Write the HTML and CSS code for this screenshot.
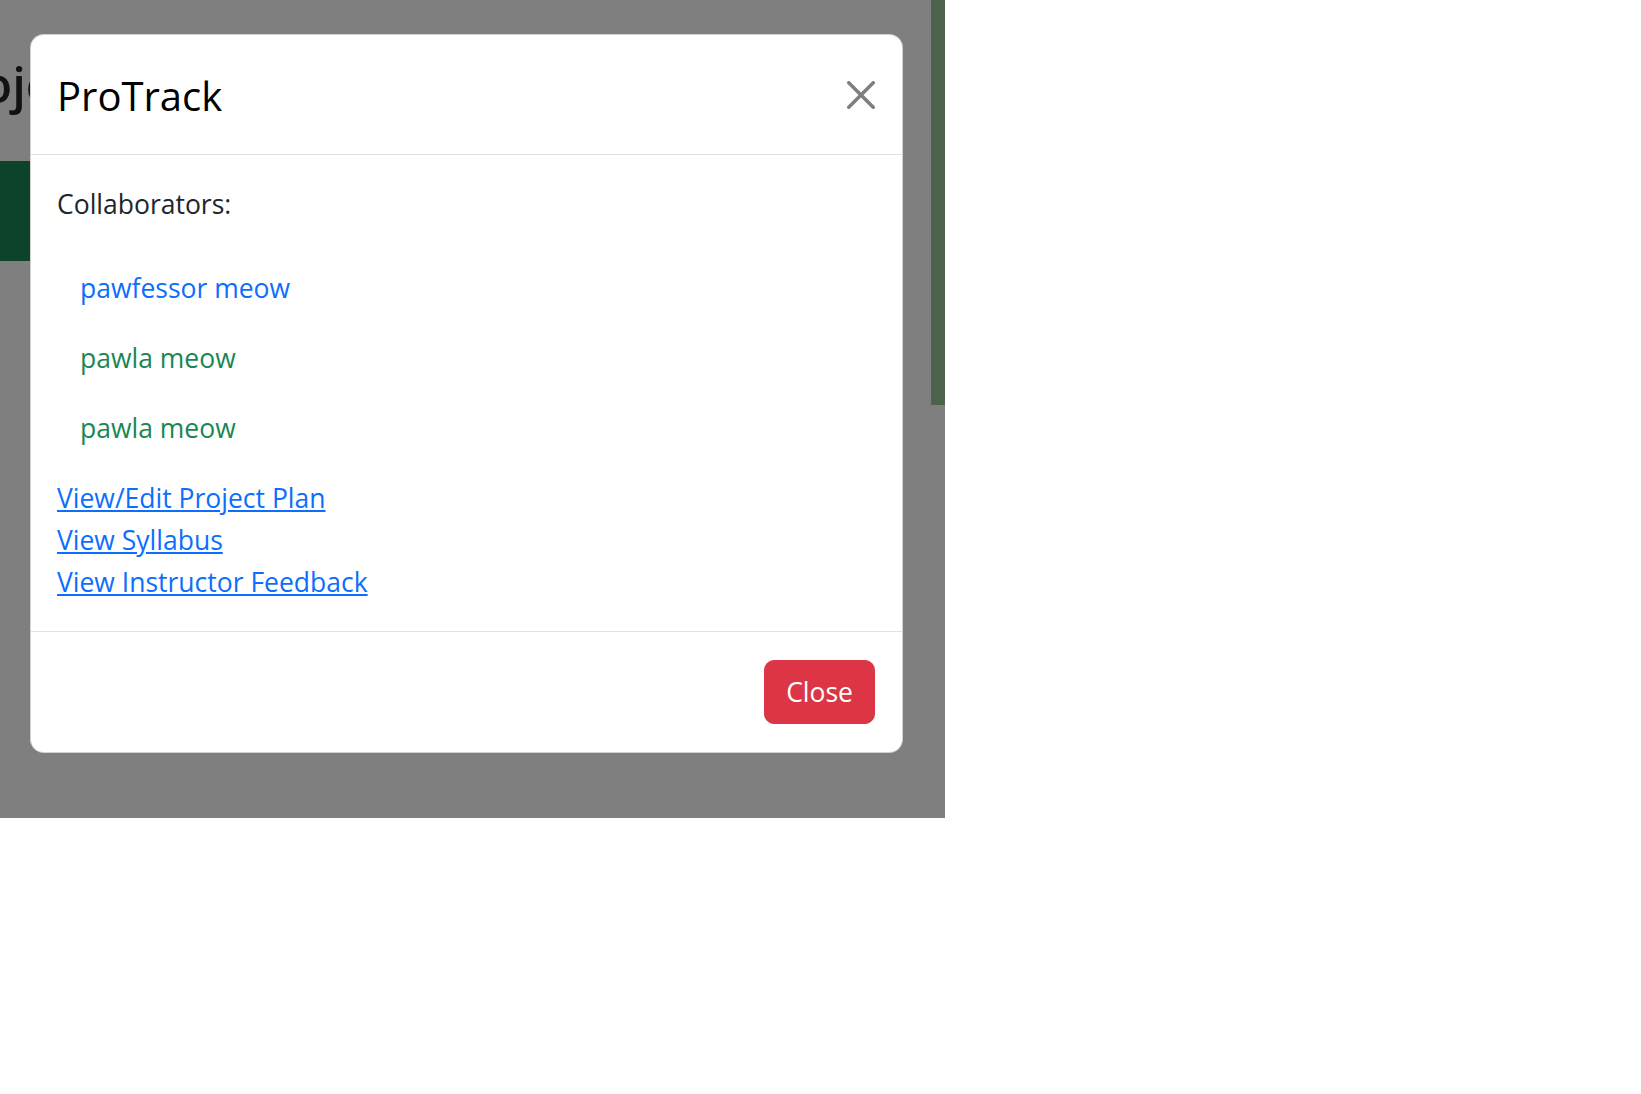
FILE: index.html
```html
<!DOCTYPE html>
<html lang="en">
<head>
<meta charset="utf-8">
<title>ProTrack</title>
<link rel="stylesheet" href="styles.css">
</head>
<body>
<div class="frame">
  <div class="page">
    <main class="page-main">
      <h1 class="page-title">Projects</h1>
      <div class="page-band"></div>
    </main>
    <div class="page-strip"></div>
  </div>
  <div class="backdrop"></div>
  <div class="modal" role="dialog" aria-labelledby="modal-title">
    <div class="modal-header">
      <h3 class="modal-title" id="modal-title">ProTrack</h3>
      <button class="btn-close" type="button" aria-label="Close">
        <svg viewBox="0 0 16 16" width="28" height="28" aria-hidden="true"><path d="M.293.293a1 1 0 0 1 1.414 0L8 6.586 14.293.293a1 1 0 1 1 1.414 1.414L9.414 8l6.293 6.293a1 1 0 0 1-1.414 1.414L8 9.414l-6.293 6.293a1 1 0 0 1-1.414-1.414L6.586 8 .293 1.707a1 1 0 0 1 0-1.414z"/></svg>
      </button>
    </div>
    <div class="modal-body">
      <p class="label">Collaborators:</p>
      <ul class="collab-list">
        <li class="collab collab-instructor">pawfessor meow</li>
        <li class="collab collab-student">pawla meow</li>
        <li class="collab collab-student">pawla meow</li>
      </ul>
      <a class="modal-link" href="#">View/Edit Project Plan</a>
      <a class="modal-link" href="#">View Syllabus</a>
      <a class="modal-link" href="#">View Instructor Feedback</a>
    </div>
    <div class="modal-footer">
      <button class="btn-danger" type="button">Close</button>
    </div>
  </div>
</div>
</body>
</html>
```

FILE: styles.css
```css
* { box-sizing: border-box; }

html, body {
  margin: 0;
  padding: 0;
  background: #fff;
}

body {
  font-family: "Open Sans", "Noto Sans", sans-serif;
  color: #212529;
}

.frame {
  position: relative;
  width: 945px;
  height: 818px;
  overflow: hidden;
}

.page {
  display: flex;
  align-items: flex-start;
  width: 100%;
  height: 100%;
  background: #fff;
}

.page-main {
  flex: 1;
  min-width: 0;
  padding-top: 56px;
}

.page-title {
  margin: 0 0 47px -69px;
  font-size: 49px;
  line-height: 57.6px;
  font-weight: 600;
  color: #212529;
  white-space: nowrap;
}

.page-band {
  width: 600px;
  height: 100px;
  background: #198754;
}

.page-strip {
  flex: 0 0 14px;
  height: 405px;
  background: #94c694;
}

.backdrop {
  position: absolute;
  inset: 0;
  background: rgba(0, 0, 0, 0.5);
}

.modal {
  position: absolute;
  left: 30px;
  top: 34px;
  width: 873px;
  background: #fff;
  border: 1px solid rgba(0, 0, 0, 0.175);
  border-radius: 14px;
}

.modal-header {
  display: flex;
  align-items: center;
  padding: 28px 27px 28px 26px;
  border-bottom: 1px solid #dee2e6;
}

.modal-title {
  flex: 1;
  margin: 0;
  font-size: 40px;
  line-height: 63px;
  font-weight: 500;
  color: #000;
  position: relative;
  top: 1px;
}

.btn-close {
  display: flex;
  padding: 0;
  margin: 0;
  border: 0;
  background: transparent;
  cursor: pointer;
}

.btn-close svg {
  display: block;
  fill: rgba(0, 0, 0, 0.5);
}

.modal-body {
  padding: 28px 26px;
  font-size: 26.5px;
  line-height: 42px;
}

.label {
  margin: 0 0 28px;
}

.collab-list {
  list-style: none;
  margin: 0;
  padding: 14px 0 0 23px;
}

.collab {
  margin: 0 0 28px;
}

.collab-instructor { color: #0d6efd; }
.collab-student { color: #198754; }

.modal-link {
  display: block;
  width: max-content;
  color: #0d6efd;
  text-decoration: underline;
  text-underline-offset: 2px;
}

.modal-footer {
  display: flex;
  justify-content: flex-end;
  padding: 21px 20px 21px 21px;
  border-top: 1px solid #dee2e6;
}

.btn-danger {
  margin: 7px;
  padding: 10px 21px;
  border: 1px solid #dc3545;
  border-radius: 10px;
  background: #dc3545;
  color: #fff;
  font-family: "Open Sans", "Noto Sans", sans-serif;
  font-size: 26.5px;
  line-height: 42px;
  cursor: pointer;
}
```
